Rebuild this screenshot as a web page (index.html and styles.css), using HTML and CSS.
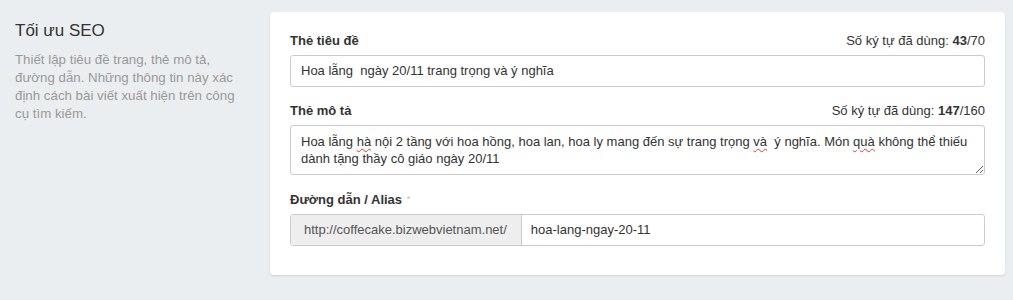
FILE: index.html
```html
<!DOCTYPE html>
<html lang="vi">
<head>
<meta charset="utf-8">
<link rel="stylesheet" href="styles.css">
</head>
<body>
<div class="page">
  <div class="side">
    <h2 class="side-title">Tối ưu SEO</h2>
    <p class="side-desc">Thiết lập tiêu đề trang, thẻ mô tả, đường dẫn. Những thông tin này xác định cách bài viết xuất hiện trên công cụ tìm kiếm.</p>
  </div>
  <div class="card">
    <div class="field">
      <div class="field-head">
        <span class="label">Thẻ tiêu đề</span>
        <span class="count">Số ký tự đã dùng: <b>43</b>/70</span>
      </div>
      <div class="input">Hoa lẵng&nbsp; ngày 20/11 trang trọng và ý nghĩa</div>
    </div>
    <div class="field">
      <div class="field-head">
        <span class="label">Thẻ mô tả</span>
        <span class="count">Số ký tự đã dùng: <b>147</b>/160</span>
      </div>
      <div class="textarea">Hoa lẵng <span class="sp">hà</span> nội 2 tầng với hoa hồng, hoa lan, hoa ly mang đến sự trang trọng <span class="sp">và</span>&nbsp; ý nghĩa. Món <span class="sp">quà</span> không thể thiếu dành tặng thầy cô giáo ngày 20/11</div>
    </div>
    <div class="field">
      <div class="field-head">
        <span class="label">Đường dẫn / Alias <span class="req">*</span></span>
      </div>
      <div class="group">
        <span class="addon">http://coffecake.bizwebvietnam.net/</span>
        <span class="group-input">hoa-lang-ngay-20-11</span>
      </div>
    </div>
  </div>
</div>
</body>
</html>
```
FILE: styles.css
```css
html, body {
  margin: 0;
  padding: 0;
  background: #ebeef0;
  font-family: "Liberation Sans", Arial, sans-serif;
  font-size: 13px;
  color: #333;
}
.page {
  display: flex;
  align-items: flex-start;
  padding: 12px 8px 0 15px;
  height: 288px;
}
.side {
  width: 232px;
  margin-right: 23px;
}
.side-title {
  margin: 9px 0 0;
  font-size: 17px;
  font-weight: normal;
  color: #333;
  line-height: 20px;
}
.side-desc {
  margin: 10px 0 0;
  color: #999;
  font-size: 13.3px;
  line-height: 18px;
}
.card {
  flex: 1;
  background: #fff;
  border-radius: 4px;
  box-shadow: 0 1px 2px rgba(0,0,0,0.12);
  padding: 20px 20px 29px;
}
.field + .field {
  margin-top: 15px;
}
.field-head {
  display: flex;
  justify-content: space-between;
  align-items: baseline;
  line-height: 18px;
  margin-bottom: 5px;
}
.label {
  font-weight: bold;
  color: #333;
}
.req {
  color: #bbb;
  font-weight: normal;
  font-size: 9px;
  vertical-align: 2px;
  margin-left: 1px;
}
.count {
  color: #333;
}
.count b {
  font-weight: bold;
}
.input {
  border: 1px solid #ccc;
  border-radius: 3px;
  height: 30px;
  line-height: 30px;
  padding: 0 10px;
  color: #333;
}
.textarea {
  border: 1px solid #ccc;
  border-radius: 3px;
  height: 34px;
  padding: 7px 10px 7px;
  line-height: 17px;
  color: #333;
  overflow: auto;
  resize: vertical;
}
.sp {
  text-decoration: underline wavy #e33;
  text-decoration-thickness: 1px;
  text-underline-offset: 2px;
}
.group {
  display: flex;
  border: 1px solid #ccc;
  border-radius: 3px;
  height: 30px;
  line-height: 30px;
}
.addon {
  background: #eee;
  color: #555;
  padding: 0 14px 0 13px;
  border-right: 1px solid #ccc;
  border-radius: 3px 0 0 3px;
}
.group-input {
  flex: 1;
  padding: 0 9px;
  color: #333;
}
```
